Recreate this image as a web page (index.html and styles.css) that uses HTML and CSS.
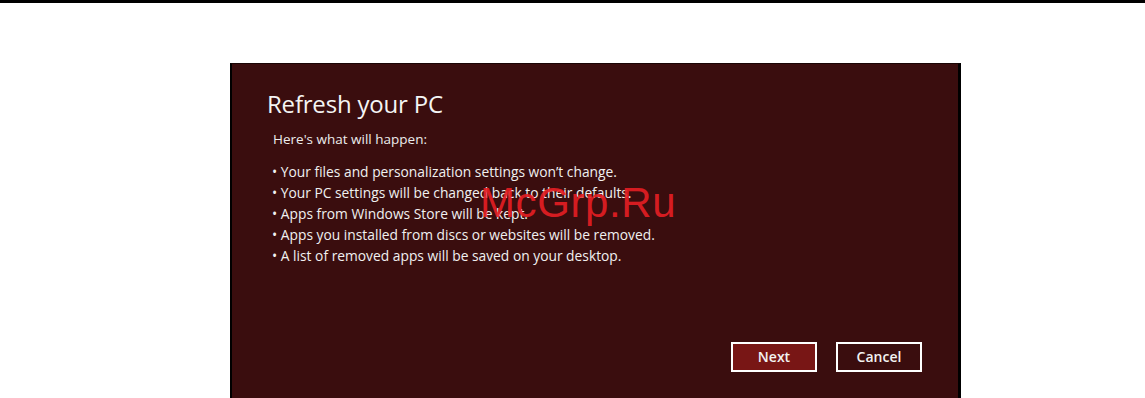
FILE: index.html
```html
<!DOCTYPE html>
<html>
<head>
<meta charset="utf-8">
<link rel="stylesheet" href="styles.css">
</head>
<body>
<div class="topline"></div>
<div class="page">
  <div class="dialog">
    <h1 class="title">Refresh your PC</h1>
    <p class="intro">Here's what will happen:</p>
    <ul class="list">
      <li>• Your files and personalization settings won’t change.</li>
      <li>• Your PC settings will be changed back to their defaults.</li>
      <li>• Apps from Windows Store will be kept.</li>
      <li>• Apps you installed from discs or websites will be removed.</li>
      <li>• A list of removed apps will be saved on your desktop.</li>
    </ul>
    <div class="buttons">
      <button class="btn btn-primary">Next</button>
      <button class="btn">Cancel</button>
    </div>
    <div class="watermark">McGrp.Ru</div>
  </div>
</div>
</body>
</html>
```
FILE: styles.css
```css
html, body {
  margin: 0;
  padding: 0;
  background: #ffffff;
  overflow: hidden;
}
.topline {
  height: 3px;
  background: #000;
}
.page {
  padding: 60px 0 0 230px;
}
.dialog {
  position: relative;
  box-sizing: border-box;
  width: 731px;
  height: 340px;
  background: #3a0d0e;
  border-left: 2px solid #000;
  border-right: 3px solid #000;
  border-top: 1px solid #1a0505;
  padding: 24px 0 0 35px;
  display: flex;
  flex-direction: column;
  font-family: "Open Sans", "Noto Sans", sans-serif;
  color: #f2f2f2;
}
.title {
  margin: 0;
  font-weight: 400;
  font-size: 24px;
  line-height: 32px;
  letter-spacing: -0.2px;
  color: #f4f4f4;
}
.intro {
  margin: 10px 0 0 6px;
  font-size: 13.5px;
  line-height: 18px;
  color: #ececec;
}
.list {
  list-style: none;
  margin: 13px 0 0 5px;
  padding: 0;
  font-size: 13.8px;
  line-height: 21px;
  color: #f0f0f0;
}
.buttons {
  display: flex;
  gap: 19px;
  margin: 76px 0 0 464px;
}
.btn {
  box-sizing: border-box;
  width: 86px;
  height: 30px;
  background: #3a0d0e;
  border: 2px solid #ffffff;
  color: #f2f2f2;
  font-family: "Open Sans", "Noto Sans", sans-serif;
  font-size: 14px;
  font-weight: 600;
  padding: 0 0 2px 0;
}
.btn-primary {
  background: #781615;
}
.watermark {
  position: absolute;
  left: 248px;
  top: 115px;
  font-family: "Liberation Sans", Arial, sans-serif;
  font-size: 42px;
  color: rgba(230, 30, 35, 0.92);
  letter-spacing: 0.6px;
}
```
